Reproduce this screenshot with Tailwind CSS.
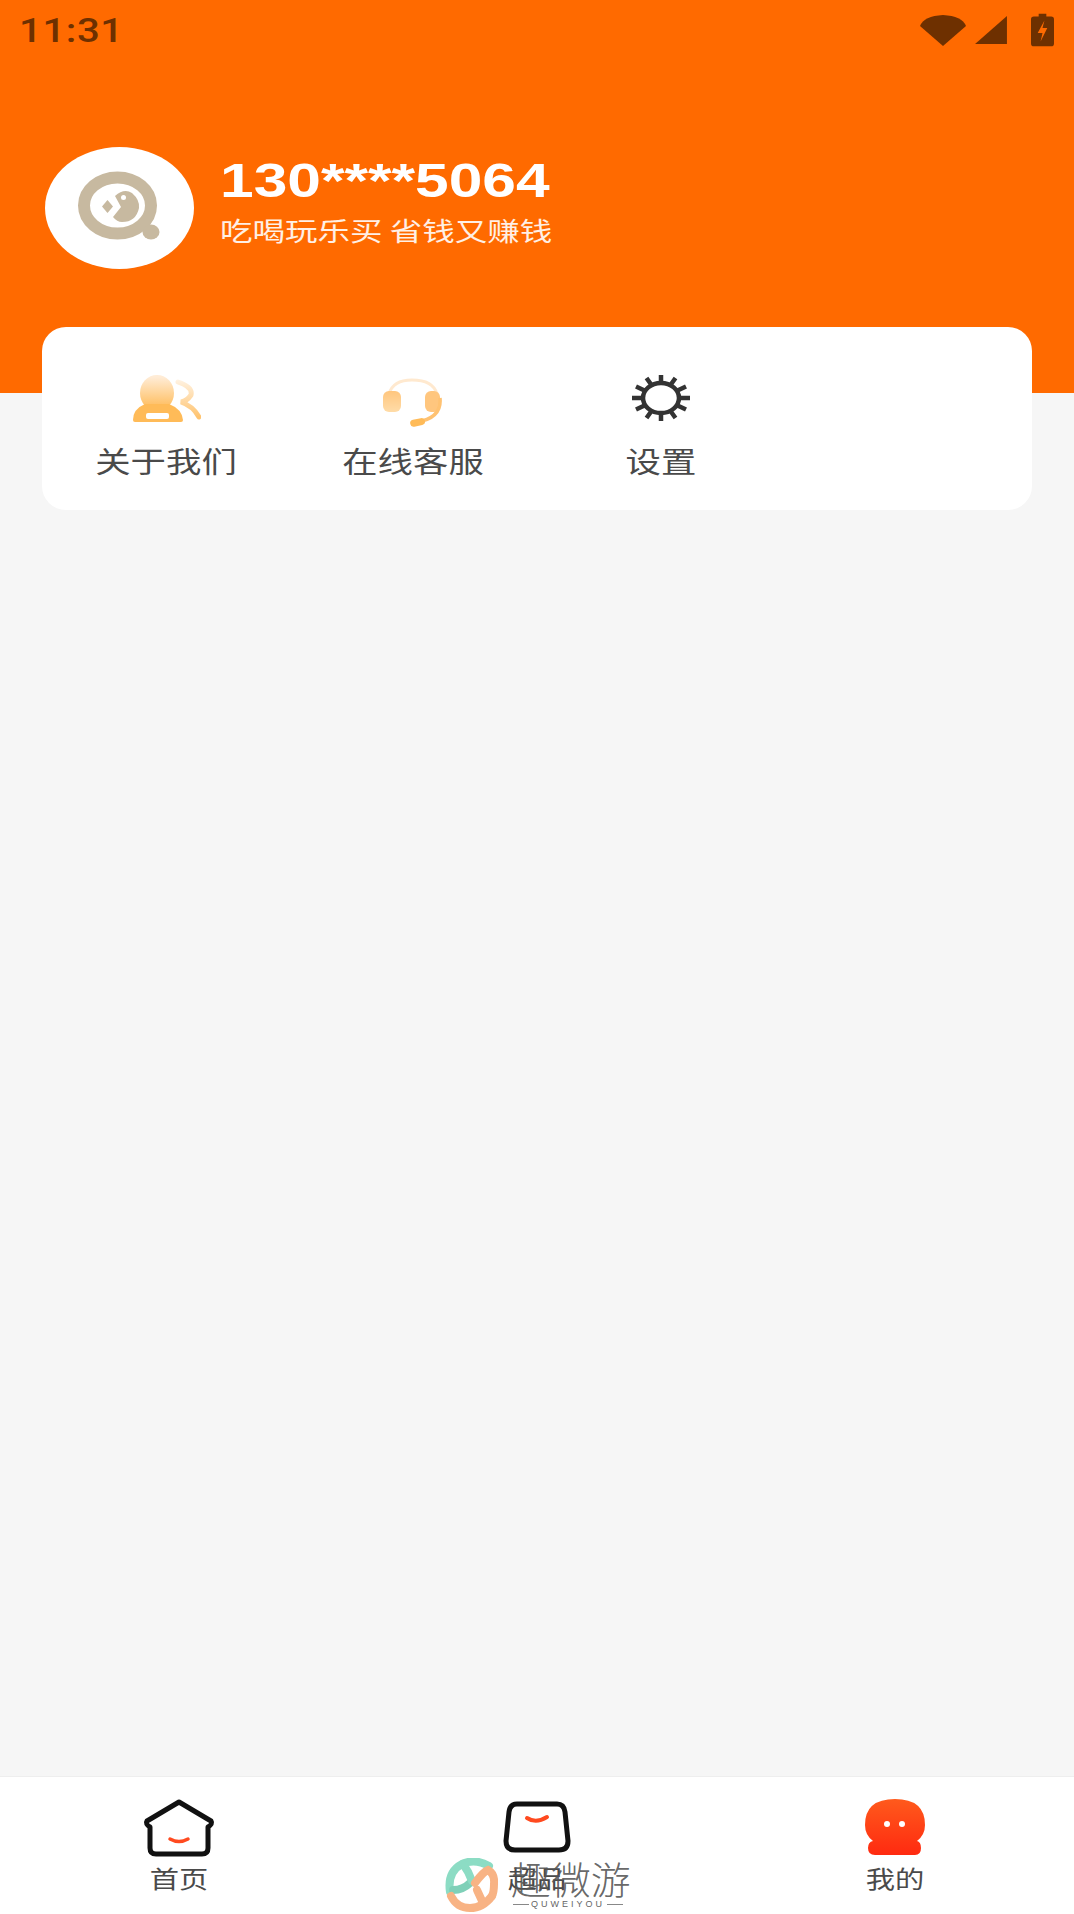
<!DOCTYPE html>
<html lang="zh">
<head>
    <meta charset="UTF-8">
    <meta name="viewport" content="width=device-width, initial-scale=1.0">
    <title>我的</title>
    <script src="https://cdn.jsdelivr.net/npm/@tailwindcss/browser@4"></script>
</head>
<body class="font-['Noto_Sans_CJK_SC','Noto_Sans',sans-serif]">
    <div class="relative flex flex-col w-[1074px] h-[1914px] overflow-hidden bg-[#f6f6f6]">
        <!-- Header -->
        <header class="h-[393px] shrink-0 bg-[#ff6a00] text-white">
            <!-- Status bar -->
            <div class="flex justify-between items-center h-[60px] pl-[19px] pr-[20px]">
                <span class="font-['Roboto',sans-serif] text-[34px] leading-none font-medium tracking-[0.5px] text-[#6e3000] origin-left scale-x-[1.18]">11:31</span>
                <div class="flex items-center gap-[8px] text-[#6e3000]">
                    <svg width="46" height="32" viewBox="0 0 46 32"><path d="M0 12Q4 2 23 1Q42 2 46 12L23 32Z" fill="currentColor"/></svg>
                    <svg width="34" height="30" viewBox="0 0 36 32"><path d="M35 1V31H1Z" fill="currentColor"/></svg>
                    <svg width="23" height="34" viewBox="0 0 24 34" class="ml-[15px]"><path d="M8 0H16V3H21Q24 3 24 6V31Q24 34 21 34H3Q0 34 0 31V6Q0 3 3 3H8Z" fill="currentColor"/><path d="M14 7L7 20H12L10 29L17 15H12Z" fill="#ff6a00"/></svg>
                </div>
            </div>
            <!-- Profile -->
            <div class="flex items-center pl-[45px] mt-[87px]">
                <div class="flex justify-center items-center w-[149px] h-[122px] rounded-[50%] bg-white">
                    <svg width="96" height="76" viewBox="0 0 96 76">
                        <ellipse cx="45.5" cy="35.5" rx="33.5" ry="28" fill="none" stroke="#c7b9a0" stroke-width="12"/>
                        <ellipse cx="79" cy="62" rx="8.5" ry="7.5" fill="#c7b9a0"/>
                        <path d="M43 26Q52 18 60 23Q68 30 67 38Q64 52 50 52Q45 52 41 47L49 37Z" fill="#c7b9a0"/>
                        <path d="M35.5 30L41 36.5L35.5 43L30 36.5Z" fill="#c7b9a0"/>
                        <circle cx="51.5" cy="27.5" r="2.5" fill="#fff"/>
                    </svg>
                </div>
                <div class="ml-[26px] mt-[-14px]">
                    <p class="font-['Liberation_Sans',sans-serif] text-[48px] leading-[50px] font-bold text-white origin-left scale-x-[1.26] w-[262px] whitespace-nowrap">130****5064</p>
                    <p class="text-[26px] leading-[32px] mt-[8px] text-white/90 origin-left scale-x-[1.25] w-[266px] whitespace-nowrap">吃喝玩乐买 省钱又赚钱</p>
                </div>
            </div>
        </header>

        <!-- Menu card -->
        <section class="relative grid grid-cols-4 shrink-0 h-[183px] mx-[42px] mt-[-66px] pt-[46px] rounded-[24px] bg-white">
            <div class="flex flex-col items-center">
                <svg width="70" height="50" viewBox="0 0 70 50">
                    <defs>
                        <linearGradient id="g1" gradientUnits="userSpaceOnUse" x1="0" y1="4" x2="0" y2="36"><stop offset="0" stop-color="#ffecd6"/><stop offset="1" stop-color="#ffbb58"/></linearGradient>
                        <linearGradient id="g1b" gradientUnits="userSpaceOnUse" x1="0" y1="6" x2="0" y2="44"><stop offset="0" stop-color="#fff3e4"/><stop offset="1" stop-color="#ffc470"/></linearGradient>
                    </defs>
                    <ellipse cx="26" cy="20" rx="17" ry="18" fill="url(#g1)"/>
                    <path d="M2 47Q2 36 14 31H38Q51 36 52 47Q52 49 50 49H4Q2 49 2 47Z" fill="#ffbb58"/>
                    <rect x="15" y="40" width="23" height="6" rx="2" fill="#fff"/>
                    <path d="M47 9Q62 14 60 22Q56 28 50 29Q62 33 68 44" fill="none" stroke="url(#g1b)" stroke-width="5" stroke-linecap="round"/>
                </svg>
                <span class="mt-[15px] text-[29px] leading-[44px] text-[#4a4a4a] scale-x-[1.22] whitespace-nowrap">关于我们</span>
            </div>
            <div class="flex flex-col items-center">
                <svg width="60" height="50" viewBox="0 0 60 50" class="mt-[5px]">
                    <defs>
                        <linearGradient id="g2" x1="0" y1="0" x2="0" y2="1"><stop offset="0" stop-color="#ffc67e"/><stop offset="1" stop-color="#ffdca8"/></linearGradient>
                    </defs>
                    <path d="M6 16Q10 2 29 2Q50 2 54 16" fill="none" stroke="#ffe9cf" stroke-width="3"/>
                    <rect x="0" y="13" width="18" height="21" rx="6" fill="url(#g2)"/>
                    <rect x="42" y="13" width="15" height="21" rx="6" fill="#ffc67e"/>
                    <path d="M57 20Q59 40 34 44" fill="none" stroke="#ffc272" stroke-width="3.5"/>
                    <rect x="27" y="41" width="15" height="7" rx="3.5" fill="#ffbb58" transform="rotate(-12 34 44)"/>
                </svg>
                <span class="mt-[10px] text-[29px] leading-[44px] text-[#4a4a4a] scale-x-[1.22] whitespace-nowrap">在线客服</span>
            </div>
            <div class="flex flex-col items-center">
                <svg width="60" height="50" viewBox="0 0 60 50" fill="none" stroke="#333" stroke-width="4.5">
                    <ellipse cx="30" cy="25" rx="18" ry="15"/>
                    <path d="M49 25H59M11 25H1M46.500 17.500L55 13.500M13.500 17.500L5 13.500M46.500 32.500L55 36.500M13.500 32.500L5 36.500M39.500 12L44.500 5M20.500 12L15.500 5M39.500 38L44.500 45M20.500 38L15.500 45M30 10V2M30 40V48"/>
                </svg>
                <span class="mt-[15px] text-[29px] leading-[44px] text-[#4a4a4a] scale-x-[1.22] whitespace-nowrap">设置</span>
            </div>
        </section>

        <div class="flex-1"></div>

        <!-- Bottom nav -->
        <nav class="grid grid-cols-3 shrink-0 h-[138px] pt-[22px] border-t-[1px] border-[#eeeeee] bg-white">
            <div class="flex flex-col items-center">
                <svg width="72" height="60" viewBox="0 0 72 60">
                    <path d="M36 3L68 22Q70 25 65 28V49Q65 55 59 55H13Q7 55 7 49V28Q2 25 4 22Z" fill="#fff" stroke="#111" stroke-width="5" stroke-linejoin="round"/>
                    <path d="M27 40Q36 45 45 40" fill="none" stroke="#ff4a1f" stroke-width="3.500" stroke-linecap="round"/>
                </svg>
                <span class="mt-[4px] text-[24px] leading-[30px] text-[#4a4a4a] scale-x-[1.22]">首页</span>
            </div>
            <div class="flex flex-col items-center">
                <svg width="68" height="56" viewBox="0 0 68 56">
                    <path d="M14 5H54Q61 5 62 13L65 42Q65 51 56 51H12Q3 51 3 42L6 13Q7 5 14 5Z" fill="#fff" stroke="#111" stroke-width="5"/>
                    <path d="M24 19Q33 25 44 18" fill="none" stroke="#ff4a1f" stroke-width="4" stroke-linecap="round"/>
                </svg>
                <span class="mt-[8px] text-[24px] leading-[30px] text-[#4a4a4a] scale-x-[1.22]">超品</span>
            </div>
            <div class="flex flex-col items-center">
                <svg width="60" height="56" viewBox="0 0 60 56">
                    <defs>
                        <linearGradient id="g3" x1="0" y1="0" x2="0" y2="1"><stop offset="0" stop-color="#ff5a1c"/><stop offset="1" stop-color="#ff2a10"/></linearGradient>
                    </defs>
                    <path d="M30 0Q60 0 60 26Q60 36 52 42Q56 43 56 49Q56 56 50 56H10Q3 56 3 49Q3 43 8 42Q0 36 0 26Q0 0 30 0Z" fill="url(#g3)"/>
                    <circle cx="22" cy="25" r="3" fill="#fff"/>
                    <circle cx="37" cy="25" r="3" fill="#fff"/>
                </svg>
                <span class="mt-[8px] text-[24px] leading-[30px] text-[#4a4a4a] scale-x-[1.22]">我的</span>
            </div>
        </nav>

        <!-- Watermark -->
        <div class="absolute left-[445px] top-[1858px] flex items-start">
            <svg width="53" height="54" viewBox="0 0 53 54" fill="none" stroke-width="8" stroke-linecap="round">
                <path d="M5 34Q2 14 17 6Q30 0 44 8" stroke="#8cdcc4"/>
                <path d="M8 32Q18 32 25 25" stroke="#7fd0b8"/>
                <path d="M18 6Q24 14 27 23" stroke="#8cdcc4"/>
                <path d="M30 25Q38 14 43 12Q50 16 49 26Q49 34 47 38" stroke="#f8b384"/>
                <path d="M6 38Q12 50 25 50Q38 50 47 38" stroke="#f8b384"/>
                <path d="M32 32L38 45" stroke="#f8b384"/>
            </svg>
            <div class="ml-[13px] flex flex-col items-center">
                <span class="text-[38px] leading-[40px] text-[#555]/90 font-light scale-x-[1.05] origin-left">趣微游</span>
                <span class="mt-[1px] flex items-center gap-[2px] font-['Liberation_Sans',sans-serif] text-[9px] leading-[10px] tracking-[3px] text-[#666]"><i class="w-[16px] h-px bg-[#888]"></i>QUWEIYOU<i class="w-[16px] h-px bg-[#888]"></i></span>
            </div>
        </div>
    </div>
</body>
</html>
